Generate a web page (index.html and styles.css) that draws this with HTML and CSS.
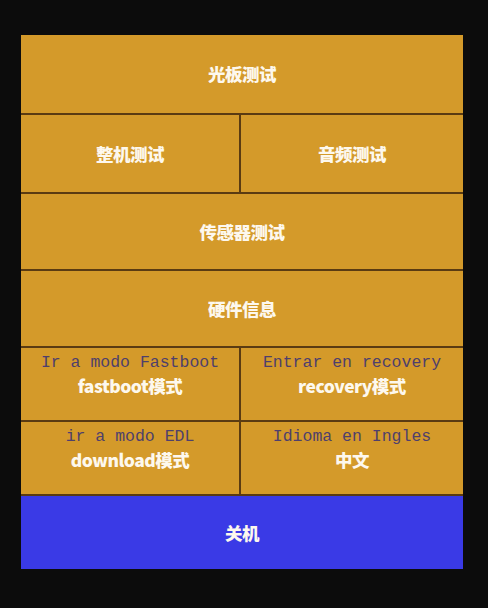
FILE: index.html
```html
<!DOCTYPE html>
<html lang="zh">
<head>
<meta charset="utf-8">
<title>工厂测试</title>
<link rel="stylesheet" href="styles.css">
</head>
<body>
<div class="screen">
  <div class="row r1"><div class="cell"><span class="zh">光板测试</span></div></div>
  <div class="row r2 split">
    <div class="cell"><span class="zh">整机测试</span></div>
    <div class="cell"><span class="zh">音频测试</span></div>
  </div>
  <div class="row r3"><div class="cell"><span class="zh">传感器测试</span></div></div>
  <div class="row r4"><div class="cell"><span class="zh">硬件信息</span></div></div>
  <div class="row r5 split">
    <div class="cell two"><span class="es">Ir a modo Fastboot</span><span class="zh">fastboot模式</span></div>
    <div class="cell two"><span class="es">Entrar en recovery</span><span class="zh">recovery模式</span></div>
  </div>
  <div class="row r6 split">
    <div class="cell two"><span class="es">ir a modo EDL</span><span class="zh">download模式</span></div>
    <div class="cell two"><span class="es">Idioma en Ingles</span><span class="zh">中文</span></div>
  </div>
  <div class="power"><span class="zh">关机</span></div>
</div>
</body>
</html>
```

FILE: styles.css
```css
html, body {
  margin: 0;
  padding: 0;
  background: #0c0c0c;
  width: 488px;
  height: 608px;
  overflow: hidden;
}
.screen {
  margin: 35px 0 0 21px;
  width: 442px;
  display: flex;
  flex-direction: column;
  background: #d49a2a;
}
.row {
  display: grid;
  grid-template-columns: 1fr;
  border-bottom: 2px solid #5a3b12;
}
.row.split {
  grid-template-columns: 220px 1fr;
}
.row.split .cell:first-child {
  border-right: 2px solid #5a3b12;
}
.r1 { height: 78px; }
.r2 { height: 77px; }
.r3 { height: 75px; }
.r4 { height: 75px; }
.r5 { height: 72px; }
.r6 { height: 72px; }
.cell {
  display: flex;
  flex-direction: column;
  align-items: center;
  justify-content: center;
}
.cell.two {
  justify-content: flex-start;
  padding-top: 5px;
  gap: 2px;
}
.zh {
  font-family: "Noto Sans CJK SC", "Noto Sans", sans-serif;
  font-weight: 900;
  font-size: 17.5px;
  line-height: 22px;
  color: #fdf8ee;
  letter-spacing: -0.5px;
}
.es {
  font-family: "Liberation Mono", "DejaVu Sans Mono", monospace;
  font-size: 16.5px;
  line-height: 20px;
  color: #4e3f6c;
}
.power {
  height: 73px;
  background: #3a3ae6;
  display: flex;
  align-items: center;
  justify-content: center;
}
```
